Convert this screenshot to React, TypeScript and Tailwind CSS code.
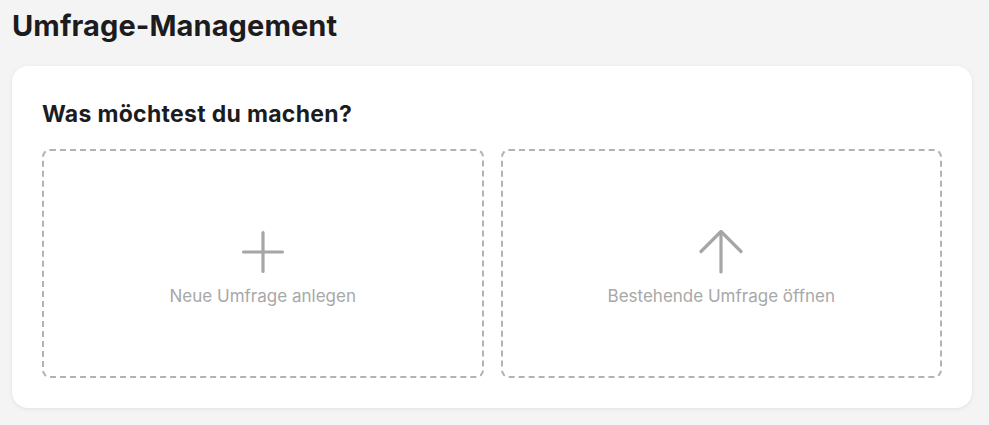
import React from "react";

function PlusIcon() {
  return (
    <svg width="44" height="44" viewBox="0 0 44 44" fill="none" stroke="#a6a6a6" strokeWidth="3.2" strokeLinecap="round" strokeLinejoin="round">
      <path d="M2.5 22h39" />
      <path d="M22 2.5v39" />
    </svg>
  );
}

function ArrowUpIcon() {
  return (
    <svg width="44" height="44" viewBox="0 0 44 44" fill="none" stroke="#a6a6a6" strokeWidth="3.2" strokeLinecap="round" strokeLinejoin="round">
      <path d="M2 21.5 22 1.5l20 20" />
      <path d="M22 2v40" />
    </svg>
  );
}

function ChoiceBox({ icon, label }: { icon: React.ReactNode; label: string }) {
  return (
    <div className="h-[229px] rounded-lg border-2 border-dashed border-[#b3b3b3] flex flex-col items-center justify-center">
      <div className="mt-[9px]">{icon}</div>
      <div className="mt-[11px] text-[17px] leading-[22px] text-[#a8a8a8]">{label}</div>
    </div>
  );
}

export default function App() {
  return (
    <div
      className="min-h-[425px] bg-[#f4f4f4] pt-[9px] px-3"
      style={{ fontFamily: "Inter, 'Noto Sans', 'Liberation Sans', sans-serif" }}
    >
      <h1 className="text-[29px] leading-[34px] font-bold text-[#1c1c1e] tracking-[0.1px]">Umfrage-Management</h1>
      <div className="mt-[23px] w-[960px] bg-white rounded-2xl shadow-[0_1px_4px_rgba(0,0,0,0.08)] px-[30px] pt-[34px] pb-[30px]">
        <h2 className="text-[23px] leading-[28px] font-bold text-[#1c1c1e] tracking-[0.3px]">Was möchtest du machen?</h2>
        <div className="mt-[21px] grid grid-cols-2 gap-[17px]">
          <ChoiceBox icon={<PlusIcon />} label="Neue Umfrage anlegen" />
          <ChoiceBox icon={<ArrowUpIcon />} label="Bestehende Umfrage öffnen" />
        </div>
      </div>
    </div>
  );
}
